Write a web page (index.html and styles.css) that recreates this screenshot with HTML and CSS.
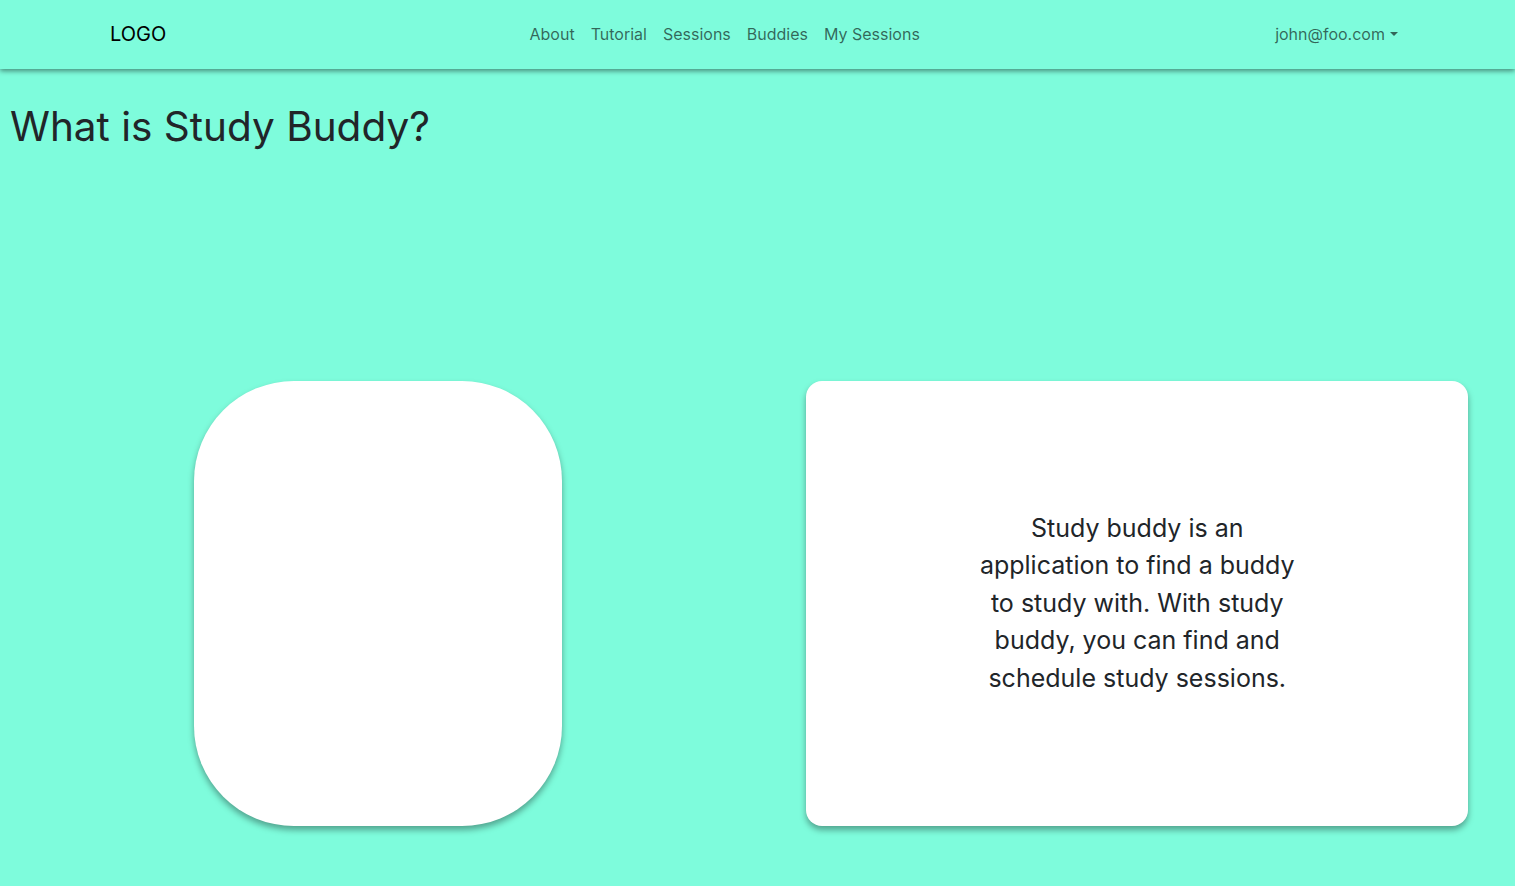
FILE: index.html
```html
<!DOCTYPE html>
<html lang="en">
<head>
<meta charset="utf-8">
<title>Study Buddy</title>
<link rel="stylesheet" href="styles.css">
</head>
<body>
<header class="navbar">
  <a class="brand" href="#">LOGO</a>
  <nav class="nav">
    <a class="nav-link" href="#">About</a>
    <a class="nav-link" href="#">Tutorial</a>
    <a class="nav-link" href="#">Sessions</a>
    <a class="nav-link" href="#">Buddies</a>
    <a class="nav-link" href="#">My Sessions</a>
  </nav>
  <a class="nav-link user" href="#">john@foo.com<span class="caret"></span></a>
</header>
<main class="page">
  <h1 class="title">What is Study Buddy?</h1>
  <section class="row">
    <div class="col col-left">
      <div class="card-pill"></div>
    </div>
    <div class="col col-right">
      <div class="card-info">
        <p class="info-text">Study buddy is an application to find a buddy to study with. With study buddy, you can find and schedule study sessions.</p>
      </div>
    </div>
  </section>
</main>
</body>
</html>
```
FILE: styles.css
```css
* { box-sizing: border-box; }
html, body { margin: 0; padding: 0; }
body {
  background: #7efcdc;
  font-family: Inter, "Noto Sans", sans-serif;
  color: #212529;
  min-height: 886px;
}
a { text-decoration: none; }
.navbar {
  height: 69px;
  display: flex;
  align-items: center;
  justify-content: space-between;
  padding: 0 109px 2px 110px;
  background: #7efcdc;
  box-shadow: 0 2px 5px rgba(0, 0, 0, 0.45);
  position: relative;
  z-index: 1;
}
.brand {
  color: #000;
  font-size: 20px;
  line-height: 30px;
}
.nav {
  display: flex;
  margin-left: 16px;
}
.nav-link {
  color: rgba(0, 0, 0, 0.6);
  font-size: 16px;
  line-height: 24px;
  padding: 8px 8px;
}
.user {
  display: flex;
  align-items: center;
}
.caret {
  display: inline-block;
  margin-left: 5px;
  border-top: 4px solid rgba(0, 0, 0, 0.6);
  border-left: 4px solid transparent;
  border-right: 4px solid transparent;
  margin-top: 1px;
}
.page {
  padding: 0 0 60px;
}
.title {
  margin: 0;
  padding: 34px 0 0 10px;
  font-size: 40.5px;
  font-weight: 400;
  line-height: 48px;
  color: #212529;
}
.row {
  display: grid;
  grid-template-columns: 1fr 1fr;
  margin-top: 230px;
}
.col {
  display: flex;
  justify-content: center;
}
.col-left { padding-right: 2px; }
.col-right { padding-left: 2px; }
.card-pill {
  width: 368px;
  height: 445px;
  background: #fff;
  border-radius: 100px;
  box-shadow: 0 4px 6px rgba(0, 0, 0, 0.35);
}
.card-info {
  width: 662px;
  height: 445px;
  background: #fff;
  border-radius: 16px;
  box-shadow: 0 4px 6px rgba(0, 0, 0, 0.35);
  display: flex;
  align-items: center;
  justify-content: center;
}
.info-text {
  margin: 0;
  width: 340px;
  text-align: center;
  font-size: 25px;
  line-height: 37.5px;
  color: #212529;
}
```
